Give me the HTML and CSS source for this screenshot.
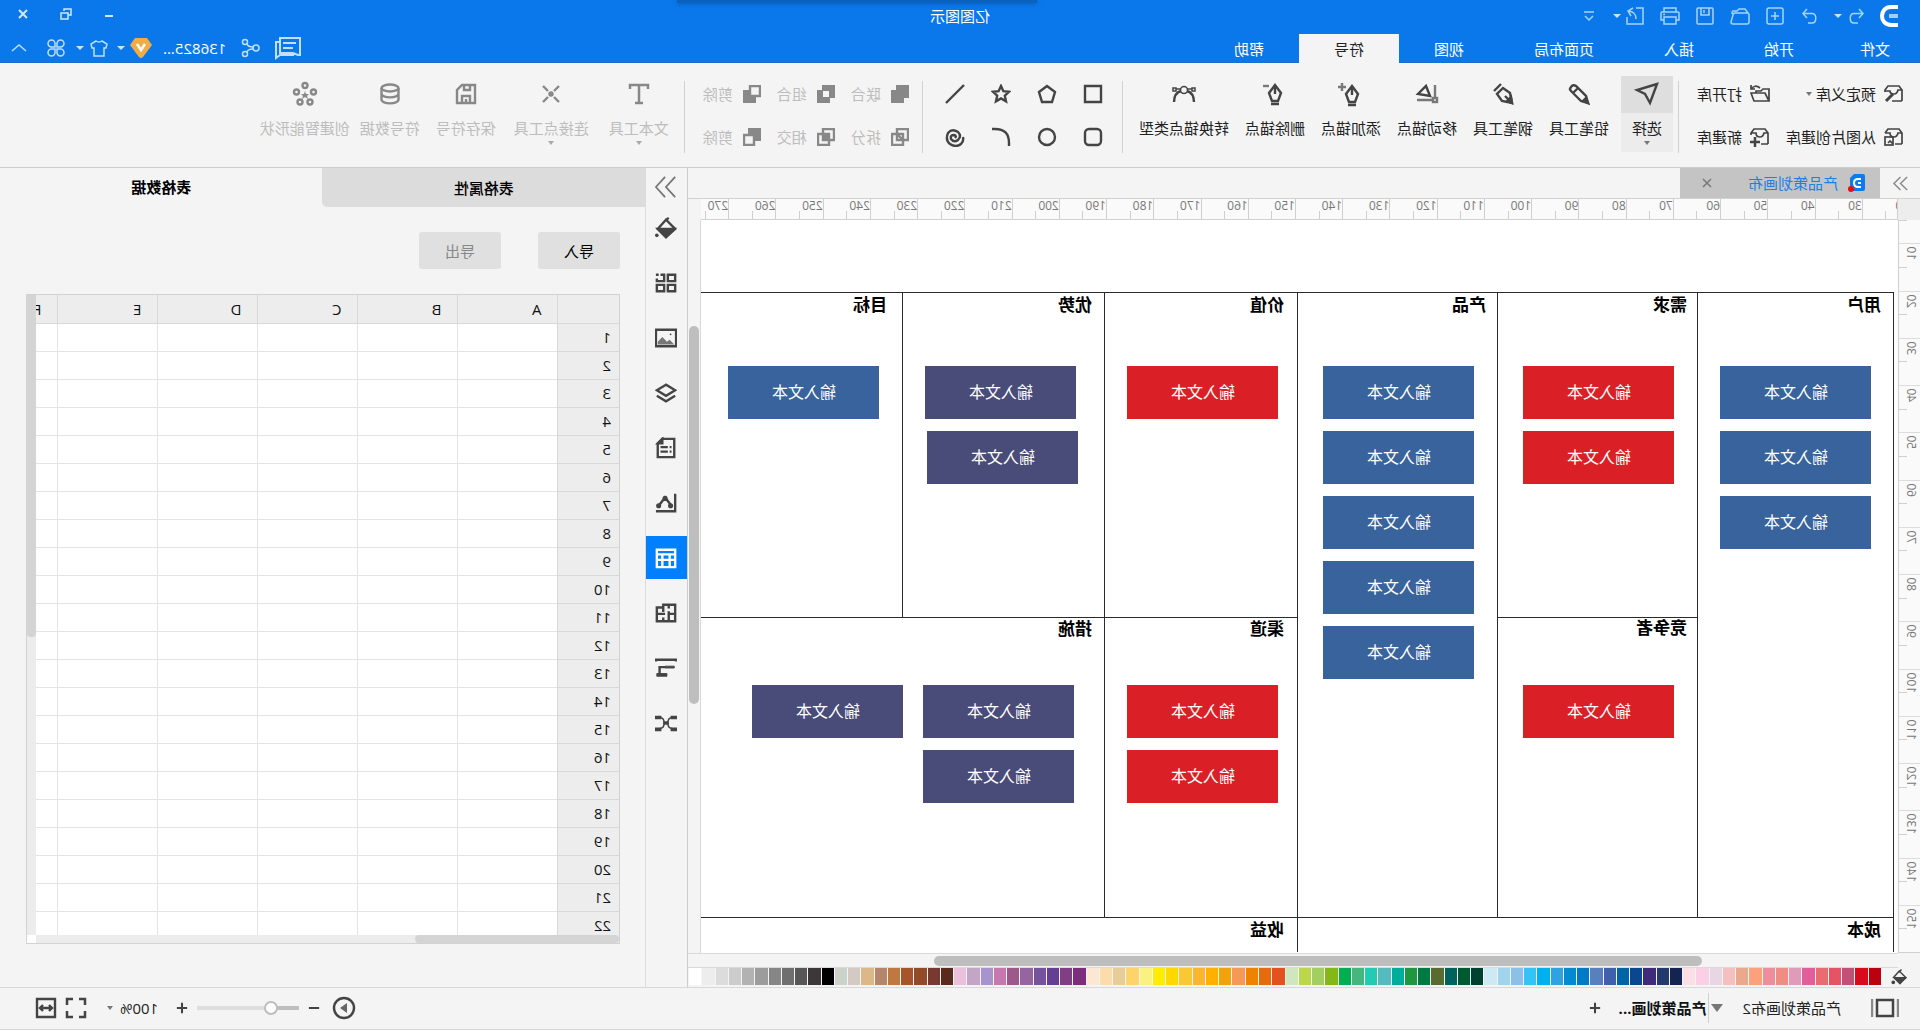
FILE: index.html
```html
<!DOCTYPE html>
<html lang="zh-CN">
<head>
<meta charset="utf-8">
<title>亿图图示</title>
<link rel="stylesheet" href="styles.css">
</head>
<body>
<div class="app">
  <header class="header">
    <div class="notch"></div>
    <div class="titlebar">
      <div class="quick">
        <svg class="logo" viewBox="0 0 20 22"><path d="M2 2h7c12 0 12 18 0 18H2" fill="none" stroke="#fff" stroke-width="4"/><path d="M2 11h9" stroke="#9fd0ff" stroke-width="4"/></svg>
        <div class="split"><button class="qbtn" aria-label="撤销"><svg viewBox="0 0 22 22"><path d="M8 4 4 8.500 8 13M4 8.500h9c5 0 5 9.500 0 9.500H9"/></svg></button><i class="caret"></i></div>
        <button class="qbtn" aria-label="重做"><svg viewBox="0 0 22 22"><path d="M14 4l4 4.500-4 4.500M18 8.500H9c-5 0-5 9.500 0 9.500h4"/></svg></button>
        <button class="qbtn" aria-label="新建"><svg viewBox="0 0 22 22"><rect x="3" y="3" width="16" height="16" rx="2"/><path d="M11 7v8M7 11h8"/></svg></button>
        <button class="qbtn" aria-label="打开"><svg viewBox="0 0 22 22"><path d="M2 10q0-2 2-2h12q2 0 2 2l2 7q0 2-2 2H4q-2 0-2-2zM3 8l3-4h6l2 2h4q1 0 1 3"/></svg></button>
        <button class="qbtn" aria-label="保存"><svg viewBox="0 0 22 22"><rect x="3" y="3" width="16" height="16" rx="1"/><path d="M7 3v7h8V3M12 5v3"/></svg></button>
        <button class="qbtn" aria-label="打印"><svg viewBox="0 0 22 22"><path d="M5 7V3h12v4M5 15H2V8q0-1 1-1h16q1 0 1 1v7h-3M5 12h12v7H5zM16 9.500h2"/></svg></button>
        <div class="split"><button class="qbtn" aria-label="导出"><svg viewBox="0 0 22 22"><path d="M10 3H3v16h16v-7M10 14c0-5 2-7 7-8M13 3l5 3-3 5"/></svg></button><i class="caret"></i></div>
        <button class="qbtn qmore" aria-label="更多"><svg viewBox="0 0 22 22"><path d="M6 7h10M7 11l4 4 4-4"/></svg></button>
      </div>
      <h1 class="title">亿图图示</h1>
      <div class="winctl">
        <button aria-label="最小化"><svg viewBox="0 0 14 14"><path d="M3 9h8"/></svg></button>
        <button aria-label="还原"><svg class="thin" viewBox="0 0 14 14"><path d="M5 6h7v6H5zM9 4V2H2v6h3"/></svg></button>
        <button aria-label="关闭"><svg viewBox="0 0 14 14"><path d="M3 3l8 8M11 3l-8 8"/></svg></button>
      </div>
    </div>
    <div class="menurow">
      <nav class="menu">
        <a href="#">文件</a><a href="#">开始</a><a href="#">插入</a><a href="#">页面布局</a><a href="#">视图</a><a href="#" class="on">符号</a><a href="#">帮助</a>
      </nav>
      <div class="account">
        <svg class="chat" viewBox="0 0 28 24"><path d="M2 2h20v15H9l-5 2H2zM22 6h4v16l-4-3H9v-2M6 7h13M9 12h10" fill="none" stroke="#bfe0ff" stroke-width="2"/></svg>
        <svg class="mid" viewBox="0 0 20 20"><g fill="none" stroke="#bfe0ff" stroke-width="1.500"><circle cx="4" cy="10" r="3"/><circle cx="15" cy="4" r="2.500"/><circle cx="15" cy="16" r="2.500"/><path d="M7 9q5 0 6-3M7 11q5 0 6 3"/></g></svg>
        <span class="user">136825...</span>
        <span class="split"><svg class="vip" viewBox="0 0 22 20"><path d="M5 0h12l5 7-9 12q-2 2-4 0L0 7z" fill="#f2ac45"/><path d="M7 6l4 6 4-6" fill="none" stroke="#fff" stroke-width="2.500"/></svg><i class="caret"></i></span>
        <span class="split shirt"><svg class="mid" viewBox="0 0 20 20"><path d="M7 3q3 2 6 0l5 3-1 4h-2v8H5v-8H3L2 6z" fill="none" stroke="#bfe0ff" stroke-width="1.500"/></svg><i class="caret"></i></span>
        <svg class="mid" viewBox="0 0 20 20"><g fill="none" stroke="#bfe0ff" stroke-width="1.500"><path d="M9 9H5.500A3.500 3.500 0 1 1 9 5.500zM11 9V5.500A3.500 3.500 0 1 1 14.500 9zM9 11v3.500A3.500 3.500 0 1 1 5.500 11zM11 11h3.500a3.500 3.500 0 1 1-3.500 3.500z"/></g></svg>
        <svg class="fold" viewBox="0 0 16 10"><path d="M1 8l7-6 7 6" fill="none" stroke="#bfe0ff" stroke-width="1.500"/></svg>
      </div>
    </div>
  </header>

  <section class="ribbon">
    <div class="libs">
      <button class="row"><svg viewBox="0 0 20 20"><path d="M2 17V6l3-4h11l3 4v2M2 6h4q1 4 4 4 4 0 4-3h5M2 17h10"/><path d="M11 10l7 7" stroke-width="3"/></svg>预定义库<i class="caret"></i></button>
      <button class="row"><svg viewBox="0 0 20 20"><path d="M1 17V5h6l2 2h5v2M1 17l4-8h14l-3 8zM10 4q5-4 9 1M19 1v4h-4"/></svg>打开库</button>
      <button class="row"><svg viewBox="0 0 20 20"><path d="M2 17V6l3-4h11l3 4M2 6h4q1 4 4 4 4 0 4-4h5M2 17h7"/><rect x="11" y="10" width="8" height="8"/><path d="M11 17l3-3 2 2" /></svg>从图片创建库</button>
      <button class="row"><svg viewBox="0 0 20 20"><path d="M2 17V6l3-4h11l3 4v2M2 6h4q1 4 4 4 4 0 4-4h5M2 17h7"/><path d="M15 10v10M10 15h10" stroke-width="2.500"/></svg>新建库</button>
    </div>
    <i class="sep"></i>
    <div class="tools">
      <button class="tool active"><span class="ico"><svg viewBox="0 0 24 24"><path d="M2 2l20 6-8 4-5 9z"/></svg></span>选择<i class="caret"></i></button>
      <button class="tool"><span class="ico"><svg viewBox="0 0 24 24"><path d="M3 21l2-7L15 4q3-2 5 1 2 2 0 4L10 19zM13 6l5 5"/><path d="M3 21l2-5 3 3z" fill="currentColor"/></svg></span>铅笔工具</button>
      <button class="tool"><span class="ico"><svg viewBox="0 0 24 24"><path d="M3 21L5 11l7-5 6 6-5 7zM3 21l7-7M14 2l7 7"/><path d="M3 21l1-6 4 4z" fill="currentColor"/></svg></span>钢笔工具</button>
      <button class="tool"><span class="ico"><svg viewBox="0 0 24 24"><path d="M9 14l4-10 8 8z"/><g opacity=".7"><path d="M4 3v13M7 18h15"/><rect x="2" y="16" width="4" height="4"/></g></svg></span>移动锚点</button>
      <button class="tool"><span class="ico"><svg viewBox="0 0 24 24"><path d="M11 4l6 8-3 8H8l-3-8zM11 4v9M7 23h8"/><path d="M21 1v8M17 5h8" opacity=".7"/></svg></span>添加锚点</button>
      <button class="tool"><span class="ico"><svg viewBox="0 0 24 24"><path d="M12 3l6 8-3 8H9l-3-8zM12 3v9M8 22h8"/><path d="M18 4h6" opacity=".7"/></svg></span>删除锚点</button>
      <button class="tool"><span class="ico"><svg viewBox="0 0 24 24"><g stroke-width="1.500"><circle cx="12" cy="8" r="3.500"/><path d="M4 7h5M15 7h5"/><rect x="1" y="6" width="3" height="3"/><rect x="20" y="6" width="3" height="3"/></g><path d="M9 9q-7 2-7 11M15 9q7 2 7 11"/></svg></span>转换锚点类型</button>
    </div>
    <i class="sep"></i>
    <div class="shapes">
      <button aria-label="矩形"><svg viewBox="0 0 20 20"><path d="M2 2h16v16H2z"/></svg></button>
      <button aria-label="五边形"><svg viewBox="0 0 20 20"><path d="M10 2l8 6-3 10H5L2 8z"/></svg></button>
      <button aria-label="星形"><svg viewBox="0 0 20 20"><path d="M10 2l2.400 5.200 5.600.6-4.200 3.800 1.200 5.800-5-3-5 3 1.200-5.800L2 7.800l5.600-.6z"/></svg></button>
      <button aria-label="直线"><svg viewBox="0 0 20 20"><path d="M1 1l18 18"/></svg></button>
      <button aria-label="圆角矩形"><svg viewBox="0 0 20 20"><rect x="2" y="2" width="16" height="16" rx="4"/></svg></button>
      <button aria-label="圆形"><svg viewBox="0 0 20 20"><circle cx="10" cy="10" r="8"/></svg></button>
      <button aria-label="弧线"><svg viewBox="0 0 20 20"><path d="M2 19v-3Q2 2 16 2h3"/></svg></button>
      <button aria-label="螺旋线"><svg viewBox="0 0 20 20"><path d="M10 11q-2-2 1-3 4 0 3 4-3 4-7 1-4-4 0-8 6-4 10 1 3 7-2 11-6 4-11 0-3-3-2-7"/></svg></button>
    </div>
    <i class="sep"></i>
    <div class="bools">
      <button class="row" disabled><svg viewBox="0 0 18 18"><path class="f" d="M0 0h13v5h5v13H5v-5H0z"/></svg>联合</button>
      <button class="row" disabled><svg viewBox="0 0 18 18"><path class="f" fill-rule="evenodd" d="M0 0h13v5h5v13H5v-5H0zM6 6v6h6V6z"/></svg>组合</button>
      <button class="row" disabled><svg viewBox="0 0 18 18"><path class="f" d="M5 5h13v13H5z"/><path class="w" d="M1 1h10v10H1z"/></svg>剪除</button>
      <button class="row" disabled><svg viewBox="0 0 18 18"><path d="M1 1h11v11H1zM6 6h11v11H6zM6 12l6-6"/></svg>拆分</button>
      <button class="row" disabled><svg viewBox="0 0 18 18"><path d="M1 1h11v11H1zM6 6h11v11H6z"/><path class="f" d="M6 6h6v6H6z"/></svg>相交</button>
      <button class="row" disabled><svg viewBox="0 0 18 18"><path class="f" d="M0 0h13v13H0z"/><path class="w" d="M7 7h10v10H7z"/></svg>剪除</button>
    </div>
    <i class="sep"></i>
    <div class="tools symbol">
      <button class="tool drop" disabled><span class="ico"><svg viewBox="0 0 24 24"><path d="M3 7V3h18v4M12 3v18M8 21h8" stroke-width="2.500"/></svg></span>文本工具<i class="caret"></i></button>
      <button class="tool drop" disabled><span class="ico"><svg viewBox="0 0 24 24"><path d="M4 4l5 5M20 4l-5 5M4 20l5-5M20 20l-5-5"/><circle cx="12" cy="12" r="1.500" fill="currentColor"/></svg></span>连接点工具<i class="caret"></i></button>
      <button class="tool" disabled><span class="ico"><svg viewBox="0 0 24 24"><path d="M3 3h13l5 5v13H3zM8 3v5h6V3M8 21v-7h8v7M12 17v4"/></svg></span>保存符号</button>
      <button class="tool" disabled><span class="ico"><svg viewBox="0 0 24 24"><ellipse cx="12" cy="6" rx="8.500" ry="3.500"/><path d="M3.500 6v12c2 4.500 15 4.500 17 0V6M3.500 12c2 4.500 15 4.500 17 0"/></svg></span>符号数据</button>
      <button class="tool smart" disabled><span class="ico"><svg viewBox="0 0 24 24"><circle cx="12" cy="3.500" r="2.500"/><circle cx="3.500" cy="10" r="2.500"/><circle cx="20.500" cy="10" r="2.500"/><circle cx="7" cy="20" r="2.500"/><circle cx="17" cy="20" r="2.500"/><path d="M12 9l1 3h3l-2 2 1 3-3-2-3 2 1-3-2-2h3z" fill="currentColor" stroke="none"/></svg></span>创建智能形状</button>
    </div>
  </section>

  <main class="work">
    <section class="doc">
      <div class="tabs">
        <button class="more" aria-label="展开"><svg viewBox="0 0 18 18"><path d="M2 2l7 7-7 7M9 2l7 7-7 7"/></svg></button>
        <div class="tab">
          <svg class="docico" viewBox="0 0 20 18"><path d="M0 2q0-2 2-2h9l4 4v13H2q-2 0-2-2z" fill="#0a7cf0"/><path d="M4 5h3q4 0 4 4t-4 4H4M4 9h3" fill="none" stroke="#fff" stroke-width="2"/><circle cx="14" cy="15" r="3" fill="#f00a0a"/></svg>
          <span>产品策划画布</span>
          <button aria-label="关闭"><svg viewBox="0 0 10 10"><path d="M1 1l8 8M9 1L1 9"/></svg></button>
        </div>
      </div>
      <div class="stage">
        <div class="corner"></div>
        <div class="hruler"><div class="hstrip" id="hstrip"></div></div>
        <div class="railtop"></div>
        <div class="vruler"><div class="vstrip" id="vstrip"></div></div>
        <div class="canvas">
          <svg class="diagram">
            <path class="frame" d="M5 732V72H1400M5 697H1400M201 72V697M401 72V697M601 72V732M794 72V697M996 72V397M201 397H401M601 397H1400"/>
            <g class="head">
              <text x="17" y="91">用户</text><text x="211" y="91">需求</text><text x="412" y="91">产品</text><text x="614" y="91">价值</text><text x="806" y="91">优势</text><text x="1011" y="91">目标</text>
              <text x="211" y="414">竞争者</text><text x="614" y="415">渠道</text><text x="806" y="415">措施</text>
              <text x="17" y="716">成本</text><text x="614" y="716">收益</text>
            </g>
            <g class="cards" id="cards"></g>
          </svg>
        </div>
        <div class="vscroll"><i></i></div>
        <div class="hscroll"><i></i></div>
      </div>
      <div class="palette">
        <svg viewBox="0 0 24 24"><path d="M4 13L13 4l7 8-8 8zM10 2l4 4"/><path d="M5 13h15l-8 8z" fill="currentColor"/><circle cx="21" cy="19" r="1.500" fill="currentColor"/></svg>
        <div class="swatches" id="swatches"></div>
      </div>
    </section>

    <nav class="side">
      <button class="sbtn fold2" aria-label="收起"><svg viewBox="0 0 24 24"><path d="M2 1l10 11L2 23M13 1l10 11-10 11"/></svg></button>
      <button class="sbtn" aria-label="填充"><svg viewBox="0 0 24 24"><path d="M2 13L12 3l9 10-9 9zM9 1l4 3"/><path d="M3 13h18l-9 9z" fill="currentColor"/><circle cx="22" cy="20" r="2" fill="currentColor" stroke="none"/></svg></button>
      <button class="sbtn" aria-label="符号库"><svg viewBox="0 0 24 24"><path d="M2 3h8v7H2zM2 14h8v7H2zM14 14h8v7h-8zM18 3h-4v7h8V7M20 3h3"/></svg></button>
      <button class="sbtn" aria-label="图片"><svg viewBox="0 0 24 24"><path d="M1 3h22v18H1z"/><path d="M3 19l5-5 3 2 5-5 5 5v3z" fill="#777" stroke="none"/><circle cx="7" cy="8" r="1" fill="currentColor" stroke="none"/></svg></button>
      <button class="sbtn" aria-label="图层"><svg viewBox="0 0 24 24"><path d="M12 3l10 6-10 6L2 9zM2 15l10 6 10-6"/></svg></button>
      <button class="sbtn" aria-label="文档"><svg viewBox="0 0 24 24"><path d="M3 2h13l5 5v15H3zM6 11h2M10 11h8M6 16h2M10 16h8"/><path d="M16 2l5 5h-5z" fill="currentColor"/></svg></button>
      <button class="sbtn" aria-label="图表"><svg viewBox="0 0 24 24"><path d="M2 2v19h21M6 15l7-9 7 9"/><g fill="currentColor"><circle cx="7" cy="15" r="1.500"/><circle cx="13" cy="7" r="1.500"/><circle cx="20" cy="15" r="1.500"/></g></svg></button>
      <button class="sbtn on" aria-label="表格"><svg viewBox="0 0 24 24"><path d="M2 3h20v19H2zM2 8h20M3 14h18M8 8v14M16 8v14"/></svg></button>
      <button class="sbtn" aria-label="平面图"><svg viewBox="0 0 24 24"><path d="M2 3h13v3h7v15H2zM9 3v4M2 13h7M9 10v11M15 6v5M13 13h9M15 17v4"/></svg></button>
      <button class="sbtn" aria-label="流程"><svg viewBox="0 0 24 24"><path d="M1 5V3h22v2M13 11h6v7"/><path d="M11 18h11v3H11zM3 10h10v2H3z" fill="currentColor" stroke-width="1"/></svg></button>
      <button class="sbtn" aria-label="关系图"><svg viewBox="0 0 24 24"><path d="M5 6q5 0 5 6t-5 6M19 6q-5 0-5 6t5 6M9 12h6" stroke-width="1.500"/><path d="M0 4h7v4H0zM17 4h7v4h-7zM0 17h7v4H0zM17 17h7v4h-7zM9 10h6v4H9z" fill="currentColor" stroke="none"/></svg></button>
    </nav>

    <aside class="panel">
      <div class="ptabs"><button>表格属性</button><button class="on">表格数据</button></div>
      <div class="pbtns"><button>导入</button><button disabled>导出</button></div>
      <div class="sheetbox">
        <div class="sheetview">
          <table class="sheet">
            <thead><tr><th></th><th>A</th><th>B</th><th>C</th><th>D</th><th>E</th><th>F</th></tr></thead>
            <tbody id="rows"></tbody>
          </table>
        </div>
        <div class="sv"><i></i></div>
        <div class="sh"><i></i></div>
      </div>
    </aside>
  </main>

  <footer class="status">
    <button class="pages" aria-label="页面"><svg viewBox="0 0 28 22"><path d="M1 2v18M27 2v18" stroke="#888"/><path d="M6 3h16v16H6z" stroke-width="2.500"/></svg></button>
    <button class="page">产品策划画布2</button>
    <i class="tri"></i>
    <button class="page current">产品策划画...</button>
    <button class="icon add" aria-label="添加页"><svg viewBox="0 0 14 14"><path d="M7 1v12M1 7h12"/></svg></button>
    <div class="zoom">
      <button class="icon big" aria-label="演示"><svg viewBox="0 0 24 24"><circle cx="12" cy="12" r="10"/><path d="M9 7l7 5-7 5z" fill="#666" stroke="none"/></svg></button>
      <button class="icon" aria-label="缩小"><svg viewBox="0 0 14 14"><path d="M1 7h12"/></svg></button>
      <input type="range" min="0" max="100" value="24" aria-label="缩放">
      <button class="icon" aria-label="放大"><svg viewBox="0 0 14 14"><path d="M7 1v12M1 7h12"/></svg></button>
      <button class="pct">100%<i class="caret"></i></button>
      <button class="icon big" aria-label="全屏"><svg viewBox="0 0 24 24"><path d="M3 9V3h6M15 3h6v6M21 15v6h-6M9 21H3v-6" stroke-width="2.500"/></svg></button>
      <button class="icon big" aria-label="适应宽度"><svg viewBox="0 0 24 24"><path d="M3 3h18v18H3zM7 12h10M9 9l-3 3 3 3M15 9l3 3-3 3"/></svg></button>
    </div>
  </footer>
</div>
<script src="app.js"></script>
</body>
</html>
```

FILE: styles.css
```css
* { box-sizing: border-box; }
html, body { margin: 0; height: 100%; overflow: hidden; }
body { font: 15px/20px "Open Sans", "Noto Sans CJK SC", sans-serif; color: #222; background: #f4f4f4; }
button { font: inherit; color: inherit; border: 0; background: none; padding: 0; margin: 0; white-space: nowrap; }
svg { display: block; flex: none; }
i { flex: none; }

/* the whole window is shown flipped, left to right */
.app { display: flex; flex-direction: column; height: 100vh; transform: scaleX(-1); }

.caret { display: inline-block; width: 0; height: 0; border: 3px solid transparent; border-top: 4px solid currentColor; border-bottom: 0; }
.split { display: flex; align-items: center; gap: 3px; }

/* header */
.header { position: relative; background: #0a78eb; color: #fff; border-bottom: 1px solid #1a70cc; height: 63px; flex: none; }
.notch { position: absolute; top: 0; left: 46%; width: 360px; height: 3px; background: #0a62be; box-shadow: 0 1px 4px #0a58b0; }
.titlebar { display: grid; grid-template-columns: 1fr auto 1fr; align-items: center; height: 34px; padding-bottom: 3px; }
.quick { display: flex; align-items: center; gap: 13px; padding-left: 20px; color: #a5d3ff; }
.quick svg { width: 22px; height: 22px; fill: none; stroke: currentColor; stroke-width: 1.5; }
.quick .logo { width: 20px; height: 22px; }
.quick .caret, .account .caret { border-width: 4px 4px 0; color: #c9e4ff; }
.title { margin: 0; font-size: 15px; font-weight: 400; line-height: 20px; }
.winctl { display: flex; justify-content: flex-end; gap: 29px; padding: 0 16px 4px 0; }
.winctl svg { width: 14px; height: 14px; fill: none; stroke: #cfe8ff; stroke-width: 2; }
.winctl .thin { stroke-width: 1.5; }
.menurow { display: flex; justify-content: space-between; height: 29px; }
.menu { display: flex; }
.menu a { color: #fff; text-decoration: none; padding: 0 35px; line-height: 30px; height: 29px; }
.menu a:first-child { padding: 0 31px 0 30px; }
.menu .on { background: #f4f4f4; color: #222; }
.account { display: flex; align-items: center; gap: 14px; padding: 0 11px 2px 0; }
.chat { width: 28px; height: 24px; }
.mid { width: 20px; height: 20px; }
.vip { width: 22px; height: 20px; }
.user { margin-right: -3px; }
.account .split { gap: 5px; margin-right: -6px; }
.account .shirt { margin-right: -4px; }
.fold { width: 16px; height: 10px; margin-left: 5px; }

/* ribbon */
.ribbon { display: flex; height: 105px; flex: none; padding-top: 8px; border-bottom: 1px solid #cdcdcd; }
.ribbon svg { fill: none; stroke: currentColor; stroke-width: 2.4; color: #444; }
.ribbon :disabled { color: #bdbdbd; }
.ribbon :disabled svg { color: #888; }
.ribbon svg .f { fill: currentColor; stroke: none; }
.ribbon svg .w { fill: #f4f4f4; }
.ribbon .caret { color: #777; }
.ribbon :disabled .caret { color: #aaa; }
.sep { width: 1px; height: 72px; margin-top: 10px; background: #d0d0d0; }
.row { display: flex; align-items: center; gap: 8px; height: 43px; }
.libs, .shapes, .bools { margin-top: 1px; }
.libs { display: grid; grid-template-columns: auto auto; grid-auto-rows: 43px; column-gap: 16px; padding: 0 18px 0 16px; }
.ribbon .libs svg { width: 20px; height: 20px; stroke-width: 1.7; }
.row .caret { margin-left: -4px; }
.tools { display: flex; align-items: flex-start; gap: 4px; padding: 5px 10px 0 5px; }
.tools.symbol { padding-left: 7px; }
.tool { display: flex; flex-direction: column; align-items: center; padding: 0 6px; height: 76px; }
.tool.drop { padding: 0 8px; }
.tool.smart { padding: 0; }
.tool.active { padding: 0; width: 52px; margin-right: 2px; background: #ececec; }
.tool .ico { display: flex; align-items: center; justify-content: center; align-self: stretch; height: 37px; margin-bottom: 5px; padding-bottom: 2px; }
.tool.active .ico { background: #dedede; }
.tool svg { width: 24px; height: 24px; overflow: visible; }
.tool .caret { margin-top: 3px; }
.shapes { display: grid; grid-template: repeat(2, 43px) / repeat(4, 46px); padding: 0 9px 0 6px; }
.shapes button { display: flex; align-items: center; justify-content: center; }
.shapes svg { width: 20px; height: 20px; }
.bools { display: grid; grid-template-columns: repeat(3, auto); grid-auto-rows: 43px; column-gap: 16px; padding: 0 18px 0 13px; }
.bools .row { gap: 10px; }
.bools svg { width: 18px; height: 18px; }

/* work area */
.work { display: flex; flex: 1; min-height: 0; }
.doc { flex: 1; min-width: 0; display: flex; flex-direction: column; border-right: 1px solid #cdcdcd; }
.tabs { display: flex; height: 30px; flex: none; }
.more { width: 40px; padding: 0 0 0 11px; }
.more svg { width: 17px; height: 17px; fill: none; stroke: #888; stroke-width: 1.5; }
.tab { display: flex; align-items: center; width: 200px; padding: 0 22px 0 15px; background: #c4c4c4; color: #1a7fe8; }
.docico { width: 20px; height: 18px; margin-right: 7px; }
.tab button { margin-left: auto; }
.tab button svg { width: 10px; height: 10px; stroke: #777; stroke-width: 1.5; }
.stage { flex: 1; min-height: 0; display: grid; grid-template: 21px 1fr 15px / 22px 1fr 13px; border-top: 1px solid #d2d2d2; }
.corner { background: #ededed; }
.hruler, .vruler { background: #fafafa; overflow: hidden; color: #777; font-size: 12px; line-height: 17px; }
.hruler { border-left: 1px solid #cfcfcf; border-bottom: 1px solid #d2d2d2; }
.vruler { border-right: 1px solid #cfcfcf; border-bottom: 1px solid #cfcfcf; }
.hstrip { display: grid; grid-template-columns: repeat(26, 1fr); width: 1228px; height: 20px; margin-left: -13px; line-height: 14px; }
.hstrip span { border-left: 1px solid #cfcfcf; background: linear-gradient(#cfcfcf, #cfcfcf) 50% 100% / 1px 8px no-repeat; }
.vstrip { display: grid; grid-template-rows: repeat(16, 1fr); height: 756px; margin-top: -24px; }
.vstrip span { display: flex; border-top: 1px solid #dcdcdc; padding-top: 2px; background: linear-gradient(#cfcfcf, #cfcfcf) 100% 50% / 8px 1px no-repeat; }
.vstrip b { writing-mode: vertical-rl; transform: rotate(180deg); font-weight: 400; text-align: right; height: 21px; width: 17px; }
.canvas { background: #fff; overflow: hidden; }
.diagram { width: 100%; height: 100%; }
.frame { fill: none; stroke: #2b2b2b; shape-rendering: crispEdges; }
.head { font-size: 17px; font-weight: 700; fill: #000; }
.cards text { font-size: 16px; fill: #fff; text-anchor: middle; }
.blue { fill: #39639c; }
.red { fill: #db1f27; }
.violet { fill: #494c78; }
.vscroll { grid-row: 2; grid-column: 3; border-left: 1px solid #d8d8d8; padding: 106px 1px 0; }
.vscroll i { display: block; height: 378px; border-radius: 5px; background: #bebebe; }
.hscroll { grid-column: 1 / -1; border: 1px solid #dadada; border-width: 1px 0; margin-left: 22px; padding: 2px 246px 1px 196px; }
.hscroll i { display: block; height: 10px; border-radius: 5px; background: #bebebe; }
.palette { display: flex; align-items: center; height: 19px; padding-bottom: 2px; flex: none; color: #444; }
.palette svg { width: 18px; height: 18px; margin: 0 10px 0 11px; fill: none; stroke: currentColor; stroke-width: 2; }
.swatches { flex: 1; display: grid; grid-template-columns: repeat(90, 1fr); height: 17px; }
.swatches i { border-right: 1px solid #f4f4f4; }

.side { display: flex; flex-direction: column; width: 42px; flex: none; border-right: 1px solid #dcdcdc; }
.sbtn { display: flex; align-items: center; justify-content: center; height: 43px; margin-bottom: 12px; color: #444; flex: none; }
.sbtn.fold2 { height: 38px; margin-bottom: 0; color: #777; }
.sbtn svg { width: 22px; height: 22px; fill: none; stroke: currentColor; stroke-width: 2.6; }
.sbtn.fold2 svg { stroke-width: 2; }
.sbtn.on { background: #0080ff; color: #fff; }

.panel { width: 645px; flex: none; }
.ptabs { display: grid; grid-template-columns: 1fr 1fr; height: 39px; color: #000; }
.ptabs button { background: #dcdcdc; border-radius: 0 0 5px 0; font-weight: 500; }
.ptabs .on { background: none; font-weight: 700; padding-bottom: 2px; }
.pbtns { display: flex; gap: 37px; padding: 25px 0 25px 25px; }
.pbtns button { width: 82px; height: 37px; border-radius: 3px; background: #e0e0e0; color: #000; }
.pbtns :disabled { color: #888; }
.sheetbox { display: grid; grid-template-columns: 1fr 9px; grid-template-rows: 640px 8px; margin: 0 26px 0 25px; border: 1px solid #d2d2d2; background: #fff; }
.sheetview { overflow: hidden; }
.sheet { table-layout: fixed; border-collapse: collapse; width: 661px; color: #111; }
.sheet tr { height: 28px; }
.sheet th, .sheet td { border: 1px solid #e4e4e4; border-width: 0 1px 1px 0; padding: 0; width: 100px; font-weight: 400; text-align: left; }
.sheet th { background: #ededed; border-color: #d8d8d8; padding: 0 0 0 16px; }
.sheet th:first-child { width: 61px; padding: 0 0 0 8px; }
.sv, .sh { background: #ececec; }
.sv i, .sh i { display: block; background: #d4d4d4; }
.sv i { height: 342px; border-radius: 0 0 4px 4px; }
.sh i { width: 204px; height: 8px; border-radius: 4px; }

/* status bar */
.status { display: flex; align-items: center; height: 43px; flex: none; padding: 0 34px 2px 21px; border: 1px solid #d8d8d8; border-width: 1px 0; color: #222; }
.status svg { fill: none; stroke: #444; stroke-width: 2.4; }
.pages { margin-right: 30px; }
.pages svg { width: 28px; height: 22px; }
.tri { border: 6px solid transparent; border-top: 8px solid #777; border-bottom: 0; margin: 0 2px 0 19px; }
.page.current { border-left: 1px solid #d0d0d0; padding-left: 2px; height: 30px; font-weight: 700; color: #111; }
.icon svg { width: 12px; height: 12px; }
.icon.big svg { width: 24px; height: 24px; }
.add { margin-left: 18px; }
.zoom { margin-left: auto; display: flex; align-items: center; }
.zoom .icon { margin-right: 9px; }
.zoom .big { margin-right: 12px; }
.zoom .pct { display: flex; align-items: center; gap: 7px; margin: 0 19px 0 9px; }
.zoom .big:nth-last-child(2) { margin-right: 6px; }
.zoom .big:last-child { margin-right: 0; }
.zoom .caret { color: #777; }
.zoom input { appearance: none; width: 102px; height: 14px; margin: 0 9px 0 0; background: linear-gradient(90deg, #bebebe 27px, #dedede 27px) 0 50% / 100% 4px no-repeat; }
.zoom input::-webkit-slider-thumb { appearance: none; width: 14px; height: 14px; border: 2px solid #bebebe; border-radius: 7px; background: #fff; }
```

FILE: app.js
```js
const fill = (id, html) => { document.getElementById(id).innerHTML = html; };
const range = n => Array.from({ length: n }, (_, i) => i);

fill('hstrip', range(26).map(i => `<span>${20 + i * 10}</span>`).join(''));
fill('vstrip', range(16).map(i => `<span><b>${i * 10}</b></span>`).join(''));

fill('rows', range(22).map(i =>
  `<tr><th>${i + 1}</th>${'<td></td>'.repeat(6)}</tr>`).join(''));

const cards = [
  ['blue', 27, 146], ['blue', 27, 211], ['blue', 27, 276],
  ['red', 224, 146], ['red', 224, 211], ['red', 224, 465],
  ['blue', 424, 146], ['blue', 424, 211], ['blue', 424, 276], ['blue', 424, 341], ['blue', 424, 406],
  ['red', 620, 146], ['red', 620, 465], ['red', 620, 530],
  ['violet', 822, 146], ['violet', 820, 211], ['violet', 824, 465], ['violet', 824, 530],
  ['violet', 995, 465], ['blue', 1019, 146]
];
fill('cards', cards.map(([c, x, y]) =>
  `<rect class="${c}" x="${x}" y="${y}" width="151" height="53"/><text x="${x + 75}" y="${y + 32}">输入文本</text>`).join(''));

const colors = `bb0010 d80b1c c25078 e65362 e86c70 e45d9a e09bb8 ee8d83 ee8e9c ffa07c eaa88e f4bfbf e8d6e4 fbd0e6 fcdfe4
12244f 233a6e 3f2a7c 0b4791 0065a6 4060ae 587fbe 007ac6 008ad0 2ea3e0 00b0f0 33c4f5 8cc0e6 9fd4ec cce9f4
004030 005a30 00645c 596b2e 007a44 1f9640 00ac9a 56bbbf 22ccb2 46b67c 00b050 84b817 a4ce62 bcd84a cfe6c0
e2511e e76a0c ef8200 f59a56 f2a30a ffb000 fcb530 fac832 ffd800 ffec00 f9f280 fdd36a e8cd96 fbdcaa fae8d2
7c2e7c 803f84 653f93 74539b 96659f 9d598a c878ae a893ce c3a5c6 ebc0dc 5a2a1c 783a30 944a28 a8542a bf7840
b4866c dcb788 d3cac6 cbd2ca 000000 3c3838 575757 6f6f6f 868686 9c9c9c b2b2b2 cccccc dcdcdc ededed ffffff`.split(/\s+/);
fill('swatches', colors.map(c => `<i style="background:#${c}"></i>`).join(''));
```
